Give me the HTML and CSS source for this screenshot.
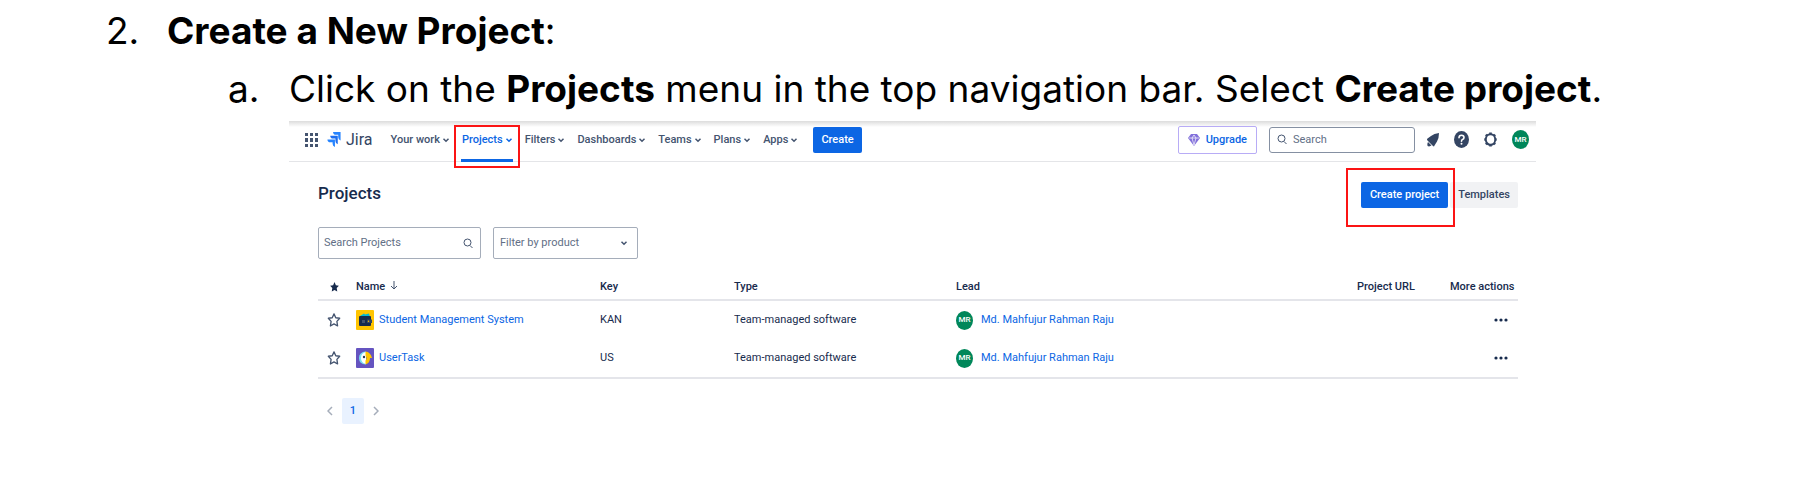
FILE: index.html
```
<!DOCTYPE html>
<html lang="en">

<head>
  <meta charset="UTF-8">
  <title>Create a New Project</title>
  <link rel="stylesheet" href="styles.css">
</head>

<body>

  <div class="step">
    <span class="marker">2.</span>
    <p><strong>Create a New Project</strong>:</p>
  </div>
  <div class="step substep">
    <span class="marker">a.</span>
    <p>Click on the <strong>Projects</strong> menu in the top navigation bar. Select <strong>Create project</strong>.</p>
  </div>

  <div class="jira">
    <header class="topbar">
      <button class="icon-btn switcher" aria-label="App switcher">
        <svg width="13" height="14" viewBox="0 0 13 14" fill="#44546f">
          <path d="M0 0h3v3H0zM5 0h3v3H5zM10 0h3v3h-3zM0 5h3v4H0zM5 5h3v4H5zM10 5h3v4h-3zM0 11h3v3H0zM5 11h3v3H5zM10 11h3v3h-3z" />
        </svg>
      </button>
      <a class="logo" href="#">
        <svg width="14" height="15" viewBox="0 0 14 16">
          <path fill="#2684ff" d="M6 0h8v9q-2.500-1-2.500-3.500V3H9Q6 3 6 0z" />
          <path fill="#1d6ef0" d="M3 4h8v9q-2.500-1-2.500-3.500V7H6Q3 7 3 4z" />
          <path fill="#2684ff" d="M0 8h8v8q-2.500-1-2.500-3.500V11H3Q0 11 0 8z" />
        </svg>
        Jira
      </a>
      <nav class="menu">
        <a href="#">Your work <svg class="chev" viewBox="0 0 6 4"><path d="M.5.8L3 3.200 5.500.8" /></svg></a>
        <a href="#" class="active">Projects <svg class="chev" viewBox="0 0 6 4"><path d="M.5.8L3 3.200 5.500.8" /></svg></a>
        <a href="#">Filters <svg class="chev" viewBox="0 0 6 4"><path d="M.5.8L3 3.200 5.500.8" /></svg></a>
        <a href="#">Dashboards <svg class="chev" viewBox="0 0 6 4"><path d="M.5.8L3 3.200 5.500.8" /></svg></a>
        <a href="#">Teams <svg class="chev" viewBox="0 0 6 4"><path d="M.5.8L3 3.200 5.500.8" /></svg></a>
        <a href="#">Plans <svg class="chev" viewBox="0 0 6 4"><path d="M.5.8L3 3.200 5.500.8" /></svg></a>
        <a href="#">Apps <svg class="chev" viewBox="0 0 6 4"><path d="M.5.8L3 3.200 5.500.8" /></svg></a>
      </nav>
      <button class="btn primary create">Create</button>

      <div class="tools">
        <button class="upgrade">
          <svg width="12" height="12" viewBox="0 0 12 12">
            <path fill="#8270db" d="M3 0h6l3 4-6 8-6-8z" />
            <path fill="none" stroke="#fff" stroke-width=".7" d="M1 4h10M6 1L4 4l2 7 2-7z" />
          </svg>
          Upgrade
        </button>
        <label class="search">
          <svg width="10" height="11" viewBox="0 0 10 11"><circle cx="4.500" cy="4.500" r="3.500" /><path d="M7 7.500L9.500 10" /></svg>
          <input type="text" placeholder="Search" aria-label="Search">
        </label>
        <div class="actions">
          <button class="icon-btn" aria-label="Notifications">
            <svg width="12" height="14" viewBox="0 0 12 14" fill="#344563">
              <path d="M12 0Q7 .5 4 3L.5 5.500q-1 1 0 2l5.500 5.500q1 1 1.500-.5L10 8.500q2-3.500 2-8.500z" />
              <path d="M1 9l3.500 3.500L2 13.500Q0 13.500.3 11z" />
            </svg>
          </button>
          <button class="icon-btn" aria-label="Help">
            <svg width="15" height="17" viewBox="0 0 15 17">
              <ellipse cx="7.500" cy="8.500" rx="7.500" ry="8.500" fill="#344563" />
              <path d="M5 6.800Q5 4.200 7.500 4.200T10 6.500Q10 8 8.500 8.600 7.500 9 7.500 10.200" fill="none" stroke="#fff" stroke-width="1.600" stroke-linecap="round" />
              <circle cx="7.500" cy="12.700" r="1" fill="#fff" />
            </svg>
          </button>
          <button class="icon-btn" aria-label="Settings">
            <svg width="13" height="15" viewBox="0 0 13 15" fill="none" stroke="#344563">
              <ellipse cx="6.500" cy="7.500" rx="4.700" ry="5.300" stroke-width="1.900" />
              <path stroke-width="2.600" d="M6.500.5v2M6.500 12.500v2M.3 7.500H2M11 7.500h1.700M2 2.500l1.200 1.400M9.800 11.100l1.200 1.400M11 2.500L9.800 3.900M3.200 11.100L2 12.500" />
            </svg>
          </button>
          <span class="avatar">MR</span>
        </div>
      </div>
    </header>

    <main>
      <div class="heading">
        <h1>Projects</h1>
        <div class="heading-btns">
          <span class="callout"><button class="btn primary">Create project</button></span>
          <button class="btn subtle">Templates</button>
        </div>
      </div>

      <div class="filters">
        <label class="field">
          <input type="text" placeholder="Search Projects" aria-label="Search Projects">
          <svg width="10" height="11" viewBox="0 0 10 11"><circle cx="4.500" cy="4.500" r="3.500" /><path d="M7 7.500L9.500 10" /></svg>
        </label>
        <div class="field product">
          <select aria-label="Filter by product">
            <option>Filter by product</option>
          </select>
          <svg class="chev" viewBox="0 0 6 4"><path d="M.5.8L3 3.200 5.500.8" /></svg>
        </div>
      </div>

      <table>
        <colgroup>
          <col class="c-star">
          <col class="c-name">
          <col class="c-key">
          <col class="c-type">
          <col class="c-lead">
          <col class="c-url">
          <col class="c-more">
        </colgroup>
        <thead>
          <tr>
            <th class="star">
              <svg width="9" height="10" viewBox="0 0 14 16" fill="#172b4d"><path d="M7 0l2.200 5.200 4.800.6-3.500 3.900.9 5.600L7 12.800l-4.400 2.500.9-5.600L0 5.800l4.800-.6z" /></svg>
            </th>
            <th>Name <svg class="sort" width="8" height="9" viewBox="0 0 8 9"><path d="M4 0v8M1 5l3 3 3-3" /></svg></th>
            <th>Key</th>
            <th>Type</th>
            <th>Lead</th>
            <th>Project URL</th>
            <th class="more">More actions</th>
          </tr>
        </thead>
        <tbody>
          <tr>
            <td class="star">
              <button class="icon-btn" aria-label="Star Student Management System">
                <svg width="14" height="16" viewBox="-1 -1 16 18" fill="none" stroke="#44546f" stroke-width="1.500" stroke-linejoin="round"><path d="M7 1l2 4.400 4.500.6-3.200 3.600.8 5.200L7 12.500l-4.100 2.300.8-5.200L.5 6 5 5.400z" /></svg>
              </button>
            </td>
            <td>
              <a class="project" href="#">
                <svg width="18" height="20" viewBox="0 0 18 20">
                  <rect width="18" height="20" rx="1" fill="#ffc400" />
                  <path fill="#00b8d9" d="M4 6l4-2.500 1 1 4-1L14 7H4z" />
                  <rect x="3" y="6" width="12" height="10" rx="1" fill="#172b4d" />
                  <path fill="#344563" d="M11 9.500h5v3.500h-5z" />
                  <circle cx="12.500" cy="11.300" r=".7" fill="#ffc400" />
                  <path fill="#42526e" d="M6 10h3v3H6z" />
                </svg>
                Student Management System
              </a>
            </td>
            <td>KAN</td>
            <td>Team-managed software</td>
            <td><a class="lead" href="#"><span class="avatar">MR</span>Md. Mahfujur Rahman Raju</a></td>
            <td></td>
            <td class="more">
              <button class="icon-btn" aria-label="More actions"><svg width="14" height="4" viewBox="0 0 14 4" fill="#172b4d"><circle cx="2" cy="2" r="1.600" /><circle cx="7" cy="2" r="1.600" /><circle cx="12" cy="2" r="1.600" /></svg></button>
            </td>
          </tr>
          <tr>
            <td class="star">
              <button class="icon-btn" aria-label="Star UserTask">
                <svg width="14" height="16" viewBox="-1 -1 16 18" fill="none" stroke="#44546f" stroke-width="1.500" stroke-linejoin="round"><path d="M7 1l2 4.400 4.500.6-3.200 3.600.8 5.200L7 12.500l-4.100 2.300.8-5.200L.5 6 5 5.400z" /></svg>
              </button>
            </td>
            <td>
              <a class="project" href="#">
                <svg width="18" height="20" viewBox="0 0 18 20">
                  <rect width="18" height="20" rx="1" fill="#6554c0" />
                  <path fill="#79e2f2" d="M10 3.500v13Q3 16 3 10t7-6.500z" />
                  <path fill="#fff" d="M10 4v12Q5 15 5 10t5-6z" />
                  <path fill="#ffc400" d="M9.500 3.500q5 .5 6.500 6.500h-2q0 5-4.500 6.500v-4q2-2 0-5z" />
                  <circle cx="8" cy="9" r="1.200" fill="#253858" />
                </svg>
                UserTask
              </a>
            </td>
            <td>US</td>
            <td>Team-managed software</td>
            <td><a class="lead" href="#"><span class="avatar">MR</span>Md. Mahfujur Rahman Raju</a></td>
            <td></td>
            <td class="more">
              <button class="icon-btn" aria-label="More actions"><svg width="14" height="4" viewBox="0 0 14 4" fill="#172b4d"><circle cx="2" cy="2" r="1.600" /><circle cx="7" cy="2" r="1.600" /><circle cx="12" cy="2" r="1.600" /></svg></button>
            </td>
          </tr>
        </tbody>
      </table>

      <div class="pages">
        <button class="icon-btn" aria-label="Previous page"><svg width="6" height="10" viewBox="0 0 6 10"><path d="M5 1L1 5l4 4" /></svg></button>
        <button class="page">1</button>
        <button class="icon-btn" aria-label="Next page"><svg width="6" height="10" viewBox="0 0 6 10"><path d="M1 1l4 4-4 4" /></svg></button>
      </div>
    </main>
  </div>

</body>

</html>
```
FILE: styles.css
```
html {
  box-sizing: border-box;
}

*,
*:before,
*:after {
  box-sizing: inherit;
}

body {
  margin: 0;
  padding-top: 2px;
  background: #fff;
}

svg {
  display: block;
  flex: none;
}

a {
  color: inherit;
  text-decoration: none;
}

button,
input,
select {
  font: inherit;
  color: inherit;
  border: 0;
  padding: 0;
  background: none;
}

/* instruction text */
.step {
  display: flex;
  padding-left: 106px;
  font: 37px/58px Inter, sans-serif;
  color: #000;
}

.step p {
  margin: 0;
}

.marker {
  width: 61px;
}

.substep {
  padding-left: 228px;
}

/* jira window */
.jira {
  margin: 3px 280px 0 289px;
  font: 11px/16px Roboto, sans-serif;
  color: #172b4d;
}

.topbar {
  display: flex;
  align-items: center;
  height: 41px;
  padding: 0 7px 3px 16px;
  border-bottom: 1px solid #e4e5e8;
  background: linear-gradient(#dcdcdc, #fff 6px);
  font-weight: 500;
  color: #44546f;
}

.logo {
  display: flex;
  align-items: center;
  gap: 5px;
  margin: 0 18px 0 9px;
  font-size: 16px;
  font-weight: 400;
  color: #344563;
}

.menu {
  display: flex;
  gap: 13px;
}

.menu a {
  display: flex;
  align-items: center;
  gap: 3px;
}

.chev {
  width: 6px;
  height: 4px;
  overflow: visible;
  fill: none;
  stroke: currentColor;
  stroke-width: 1.500;
}

.menu .active {
  position: relative;
  color: #0c66e4;
}

.active:before {
  content: "";
  position: absolute;
  left: -1px;
  right: -1px;
  top: 27px;
  height: 3px;
  background: #0c66e4;
}

.active:after {
  content: "";
  position: absolute;
  inset: -7px -8px -20px;
  border: 2px solid #fb1414;
}

.btn {
  height: 26px;
  padding: 0 9px;
  border-radius: 2px;
  font-weight: 500;
}

.primary {
  background: #0c66e4;
  color: #fff;
}

.subtle {
  padding: 0 8px;
  background: #f1f2f4;
  color: #344563;
}

.create {
  margin-left: 16px;
  padding: 0 8px;
}

.tools {
  display: flex;
  align-items: center;
  gap: 12px;
  margin-left: auto;
}

.upgrade {
  display: flex;
  align-items: center;
  gap: 6px;
  height: 28px;
  padding: 0 9px;
  border: 1px solid #b8acf6;
  border-radius: 2px;
  color: #0c66e4;
}

.search {
  display: flex;
  align-items: center;
  gap: 6px;
  width: 146px;
  height: 26px;
  padding: 0 7px;
  border: 1px solid #8590a2;
  border-radius: 3px;
  background: #fff;
  font-weight: 400;
}

.search svg,
.field > svg {
  fill: none;
  stroke: #44546f;
}

input {
  min-width: 0;
  flex: 1;
}

input::placeholder {
  color: #626f86;
  opacity: 1;
}

.actions {
  display: flex;
  align-items: center;
  gap: 15px;
}

.avatar {
  display: inline-flex;
  align-items: center;
  justify-content: center;
  width: 17px;
  height: 19px;
  border-radius: 50%;
  background: #00875a;
  color: #fff;
  font-size: 8px;
  font-weight: 500;
}

main {
  padding: 20px 18px 0 29px;
}

.heading,
.heading-btns {
  display: flex;
}

.heading {
  justify-content: space-between;
}

.heading-btns {
  align-items: center;
  gap: 2px;
}

h1 {
  margin: 0;
  font-size: 17px;
  font-weight: 500;
  line-height: 22px;
}

.callout {
  position: relative;
}

.callout:after {
  content: "";
  position: absolute;
  inset: -14px -7px -19px -15px;
  border: 2px solid #fb1414;
}

.filters {
  display: flex;
  gap: 12px;
  margin-top: 19px;
}

.field {
  display: flex;
  align-items: center;
  width: 163px;
  height: 32px;
  padding: 0 7px 0 5px;
  border: 1px solid #a5adba;
  border-radius: 2px;
  color: #626f86;
}

.product {
  width: 145px;
  padding: 0 10px 0 6px;
}

select {
  flex: 1;
  appearance: none;
}

.product .chev {
  stroke: #44546f;
}

table {
  width: 100%;
  margin-top: 15px;
  border-collapse: collapse;
  table-layout: fixed;
  border-bottom: 2px solid #e4e5ea;
}

.c-star {
  width: 38px;
}

.c-name {
  width: 244px;
}

.c-key {
  width: 134px;
}

.c-type {
  width: 222px;
}

.c-url {
  width: 93px;
}

.c-more {
  width: 68px;
}

th,
td {
  padding: 0;
  text-align: left;
  white-space: nowrap;
}

th {
  height: 26px;
  border-bottom: 2px solid #e4e5ea;
  font-weight: 500;
}

td {
  height: 39px;
}

td .icon-btn,
.star svg {
  display: block;
}

.star svg {
  margin: 0 auto;
}

.star .icon-btn {
  width: 100%;
  padding-right: 6px;
}

th.star {
  padding-right: 6px;
}

.sort {
  display: inline;
  margin-left: 2px;
  fill: none;
  stroke: #44546f;
}

.project,
.lead {
  display: flex;
  align-items: center;
  gap: 5px;
  color: #0c66e4;
}

.lead {
  gap: 8px;
}

.more .icon-btn {
  margin: 0 10px 0 auto;
}

.pages {
  display: flex;
  align-items: center;
  gap: 9px;
  margin-top: 19px;
  padding-left: 9px;
}

.pages svg {
  fill: none;
  stroke: #a5adba;
  stroke-width: 1.500;
}

.page {
  width: 22px;
  height: 26px;
  border-radius: 2px;
  background: #e9f2ff;
  color: #0c66e4;
  font-weight: 500;
}
```
